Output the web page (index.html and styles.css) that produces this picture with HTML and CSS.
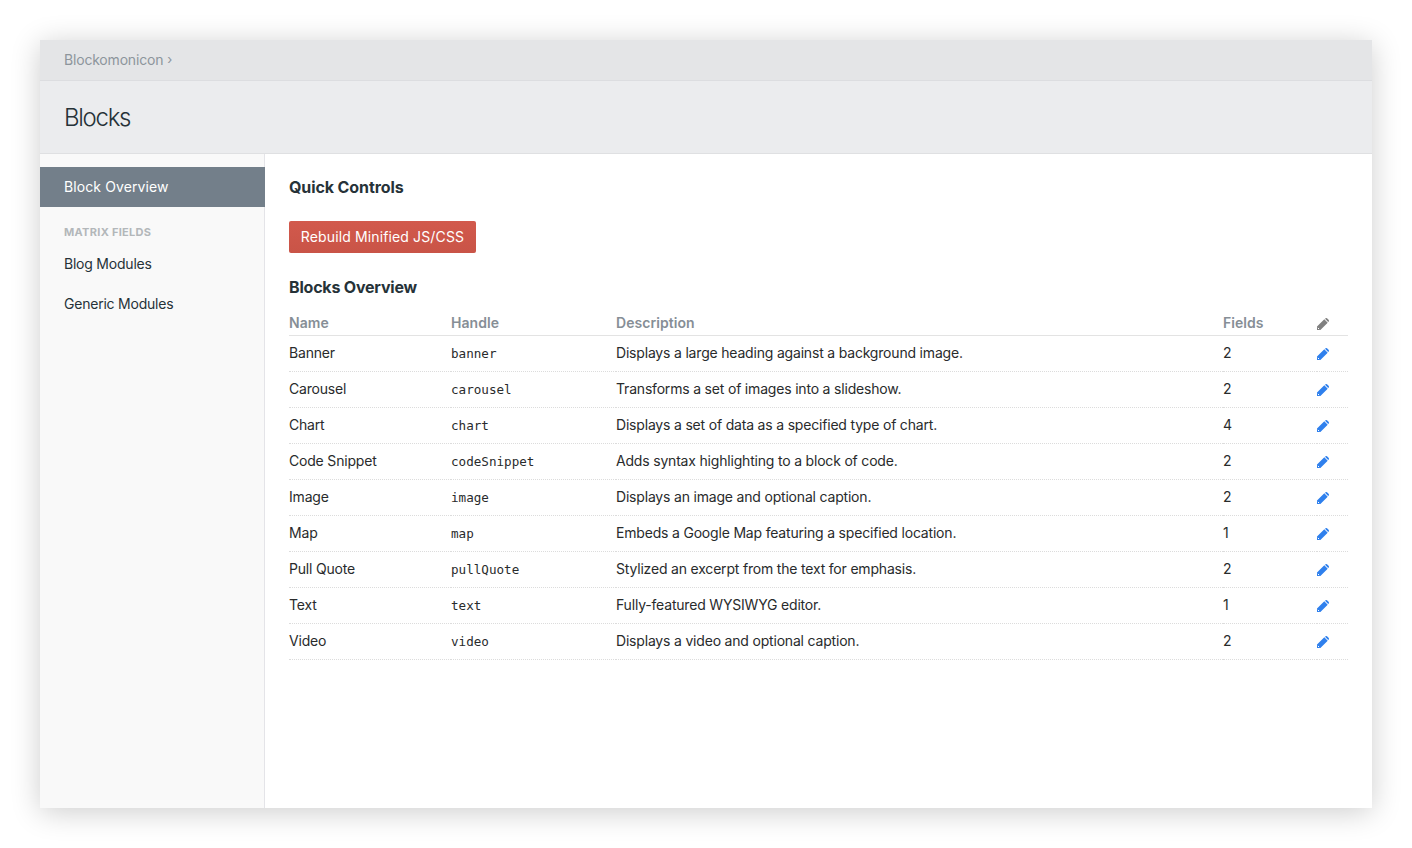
FILE: index.html
```html
<!DOCTYPE html>
<html lang="en">
<head>
<meta charset="utf-8">
<title>Blocks</title>
<link rel="stylesheet" href="styles.css">
</head>
<body>
<div class="window">
  <div class="crumbs"><a>Blockomonicon</a><span class="sep">›</span></div>
  <header class="title"><h1>Blocks</h1></header>
  <div class="body">
    <aside class="side">
      <a class="nav active">Block Overview</a>
      <div class="nav-head">MATRIX FIELDS</div>
      <a class="nav">Blog Modules</a>
      <a class="nav">Generic Modules</a>
    </aside>
    <main class="main">
      <h2 class="h-quick">Quick Controls</h2>
      <button class="btn">Rebuild Minified JS/CSS</button>
      <h2 class="h-over">Blocks Overview</h2>
      <table class="tbl">
        <thead>
          <tr><th class="c1">Name</th><th class="c2">Handle</th><th class="c3">Description</th><th class="c4">Fields</th><th class="c5"><svg class="pen grey" viewBox="0 0 12 12"><use href="#pencil"/></svg></th></tr>
        </thead>
        <tbody>
          <tr><td>Banner</td><td><code>banner</code></td><td>Displays a large heading against a background image.</td><td>2</td><td><svg class="pen" viewBox="0 0 12 12"><use href="#pencil"/></svg></td></tr>
          <tr><td>Carousel</td><td><code>carousel</code></td><td>Transforms a set of images into a slideshow.</td><td>2</td><td><svg class="pen" viewBox="0 0 12 12"><use href="#pencil"/></svg></td></tr>
          <tr><td>Chart</td><td><code>chart</code></td><td>Displays a set of data as a specified type of chart.</td><td>4</td><td><svg class="pen" viewBox="0 0 12 12"><use href="#pencil"/></svg></td></tr>
          <tr><td>Code Snippet</td><td><code>codeSnippet</code></td><td>Adds syntax highlighting to a block of code.</td><td>2</td><td><svg class="pen" viewBox="0 0 12 12"><use href="#pencil"/></svg></td></tr>
          <tr><td>Image</td><td><code>image</code></td><td>Displays an image and optional caption.</td><td>2</td><td><svg class="pen" viewBox="0 0 12 12"><use href="#pencil"/></svg></td></tr>
          <tr><td>Map</td><td><code>map</code></td><td>Embeds a Google Map featuring a specified location.</td><td>1</td><td><svg class="pen" viewBox="0 0 12 12"><use href="#pencil"/></svg></td></tr>
          <tr><td>Pull Quote</td><td><code>pullQuote</code></td><td>Stylized an excerpt from the text for emphasis.</td><td>2</td><td><svg class="pen" viewBox="0 0 12 12"><use href="#pencil"/></svg></td></tr>
          <tr><td>Text</td><td><code>text</code></td><td>Fully-featured WYSIWYG editor.</td><td>1</td><td><svg class="pen" viewBox="0 0 12 12"><use href="#pencil"/></svg></td></tr>
          <tr><td>Video</td><td><code>video</code></td><td>Displays a video and optional caption.</td><td>2</td><td><svg class="pen" viewBox="0 0 12 12"><use href="#pencil"/></svg></td></tr>
        </tbody>
      </table>
    </main>
  </div>
</div>
<svg class="defs" width="0" height="0"><defs><g id="pencil"><path d="M0 8.6 L7.3 1.3 L10.7 4.7 L3.4 12 L0 12 Z M8 0.8 L8.6 0.2 Q9.3 -0.1 10 0.2 L11.8 2 Q12.1 2.7 11.8 3.4 L11.2 4 Z" fill="currentColor"/><path d="M0.9 9.9 L2.1 11.1" stroke="#fff" stroke-width="1"/></g></defs></svg>
</body>
</html>
```
FILE: styles.css
```css
* { box-sizing: border-box; }
html, body { margin: 0; height: 100%; }
body { background: #fff; padding: 40px; height: 848px; overflow: hidden; font-family: "Inter", "Liberation Sans", sans-serif; font-size: 14px; letter-spacing: -.19px; color: #292b2c; }
.defs { position: absolute; }
.window { height: 768px; display: flex; flex-direction: column; background: #fff; box-shadow: 0 4px 28px rgba(0,0,0,.2); }
.crumbs { height: 41px; flex: none; background: #e4e5e7; border-bottom: 1px solid #dcdde0; padding: 0 24px 2px; display: flex; align-items: center; color: #8d959c; }
.sep { margin-left: 4px; font-size: 13px; }
.title { height: 73px; flex: none; background: #ebecee; border-bottom: 1px solid #dfe0e2; padding: 0 24px; display: flex; align-items: center; }
h1 { margin: 0; font-size: 24px; font-weight: 300; color: #263238; letter-spacing: -1.3px; }
.body { flex: 1; display: flex; min-height: 0; }
.side { width: 225px; flex: none; background: #f9f9f9; border-right: 1px solid #e4e4e8; padding-top: 13px; }
.nav { display: flex; align-items: center; height: 40px; padding: 0 24px 2px; color: #263238; letter-spacing: -.22px; }
.nav.active { background: #737f8a; color: #fff; letter-spacing: .1px; width: 225px; }
.nav-head { margin-top: 17px; height: 16px; padding: 0 24px; font-size: 11px; font-weight: 700; letter-spacing: .3px; color: #b3b7ba; display: flex; align-items: center; margin-bottom: 4px; }
.main { flex: 1; padding: 23px 24px 0; min-width: 0; }
h2 { margin: 0; font-size: 16px; font-weight: 700; color: #263238; line-height: 20px; letter-spacing: -.2px; }
.h-quick { letter-spacing: -.1px; }
.btn { display: block; margin-top: 24px; width: 187px; height: 32px; padding: 0 0 2px; background: linear-gradient(#d2594c, #c95447); border: 0; border-radius: 2px; color: #fff; font: inherit; letter-spacing: .13px; }
.h-over { margin-top: 24px; }
.tbl { margin-top: 15px; width: 100%; border-collapse: collapse; table-layout: fixed; }
th { height: 23px; padding: 0 0 2px; text-align: left; font-weight: 600; letter-spacing: .05px; color: #868e96; border-bottom: 1px solid #e3e3e3; vertical-align: middle; }
td { height: 36px; padding: 0 0 2px; border-bottom: 1px dotted #dcdcdc; vertical-align: middle; }
.c1 { width: 162px; }
.c2 { width: 165px; }
.c3 { width: 607px; }
.c4 { width: 94px; }
code { font-family: "DejaVu Sans Mono", monospace; font-size: 12.6px; letter-spacing: 0; }
.pen { display: block; width: 12px; height: 12px; color: #2f80ed; margin-top: 4px; }
th .pen { margin-top: 3px; }
.pen.grey { color: #808080; }
```
